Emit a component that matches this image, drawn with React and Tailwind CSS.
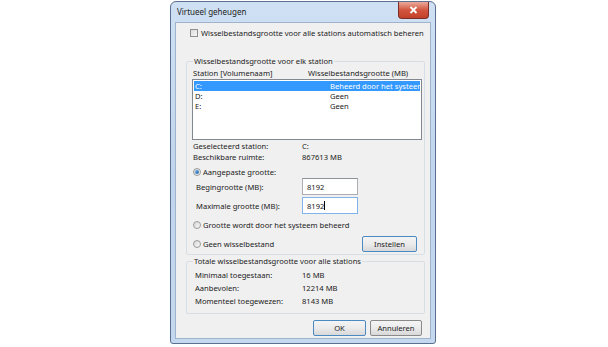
import { useState } from 'react'

const font = { fontFamily: '"Noto Sans", "Liberation Sans", sans-serif' }

function Radio({ checked, label }) {
  return (
    <div className="flex items-center h-[10px]">
      <span className="w-[8px] h-[8px] rounded-full border border-[#9a9a9a] bg-gradient-to-br from-[#d8d8d8] to-[#f8f8f8] flex items-center justify-center">
        {checked && <span className="w-[4px] h-[4px] rounded-full bg-gradient-to-br from-[#6fb3ea] to-[#1c5fa8]" />}
      </span>
      <span className="ml-[2px]">{label}</span>
    </div>
  )
}

function Button({ children, w, focus }) {
  return (
    <div className={`h-[16px] ${w} rounded-[2px] border ${focus ? 'border-[#4a8ac3]' : 'border-[#8a8a8a]'} bg-gradient-to-b from-[#f4f4f4] via-[#ebebeb] to-[#d8d8d8] flex items-center justify-center`}>
      {children}
    </div>
  )
}

function Row({ label, value, indent }) {
  return (
    <div className="flex h-[10px] items-center">
      <span className={`w-[109px] ${indent ? 'pl-[2px]' : ''}`}>{label}</span>
      <span>{value}</span>
    </div>
  )
}

export default function App() {
  const [rows] = useState([
    { id: 'C:', size: 'Beheerd door het systeem', sel: true },
    { id: 'D:', size: 'Geen' },
    { id: 'E:', size: 'Geen' },
  ])

  return (
    <div className="w-[608px] h-[347px] bg-white overflow-hidden text-[7.6px] leading-[10px] text-[#222]" style={font}>
      <div className="ml-[170px] mt-[1px] w-[266px] h-[343px] rounded-t-[6px] rounded-b-[3px] border border-[#5b7090] bg-gradient-to-b from-[#cfe0f3] via-[#c0d6ee] to-[#c4d8ef] flex flex-col px-[4px] pb-[4px]">
        {/* title bar */}
        <div className="h-[20px] flex items-start justify-between">
          <span className="mt-[5px] ml-[2px] text-[8px]">Virtueel geheugen</span>
          <div className="w-[31px] h-[17px] rounded-b-[4px] border border-t-0 border-[#7a2e25] bg-gradient-to-b from-[#e9a99b] via-[#d2553f] to-[#c3402a] flex items-center justify-center mr-[2px]">
            <svg width="9" height="8" viewBox="0 0 9 8">
              <path d="M1.5 1 L7.5 7 M7.5 1 L1.5 7" stroke="#ffffff" strokeWidth="1.8" />
            </svg>
          </div>
        </div>

        {/* client area */}
        <div className="flex-1 bg-[#f0f0f0] border border-[#9fb3cc] flex flex-col">
          <div className="mt-[5px] ml-[14px] flex items-center h-[10px]">
            <span className="w-[8px] h-[8px] border border-[#8f8f8f] bg-gradient-to-br from-[#dcdcdc] to-[#f6f6f6]" />
            <span className="ml-[3px]">Wisselbestandsgrootte voor alle stations automatisch beheren</span>
          </div>

          <fieldset className="mt-[18px] ml-[10px] w-[239px] min-w-0 border border-[#d5dfe5] rounded-[2px] pb-[2px]">
            <legend className="ml-[6px] px-[1px] h-[10px]">Wisselbestandsgrootte voor elk station</legend>
            <div className="pl-[6px] pr-[2px] flex flex-col">
              <div className="mt-[2px] flex h-[10px] items-center">
                <span className="w-[115px]">Station [Volumenaam]</span>
                <span>Wisselbestandsgrootte (MB)</span>
              </div>
              <div className="mt-[1px] -ml-[1px] h-[61px] bg-white border border-[#828790] pt-[1px] px-[1px] overflow-hidden">
                {rows.map(r => (
                  <div key={r.id} className={`flex h-[10px] items-center whitespace-nowrap overflow-hidden ${r.sel ? 'bg-[#3399ff] text-white' : ''}`}>
                    <span className="w-[136px] shrink-0 pl-[1px]">{r.id}</span>
                    <span>{r.size}</span>
                  </div>
                ))}
              </div>
              <div className="mt-[1px]"><Row label="Geselecteerd station:" value="C:" /></div>
              <div className="mt-[1px]"><Row label="Beschikbare ruimte:" value="867613 MB" /></div>
              <div className="mt-[5px]"><Radio checked label="Aangepaste grootte:" /></div>
              <div className="mt-[1px] flex items-center h-[17px]">
                <span className="w-[109px] pl-[3px]">Begingrootte (MB):</span>
                <div className="w-[56px] h-[17px] bg-white border border-[#abadb3] border-t-[#8e9299] flex items-center pl-[4px]">8192</div>
              </div>
              <div className="mt-[2px] flex items-center h-[17px]">
                <span className="w-[109px] pl-[3px]">Maximale grootte (MB):</span>
                <div className="w-[56px] h-[17px] bg-white border border-[#7eb4ea] flex items-center pl-[4px]">
                  8192<span className="w-px h-[9px] bg-black" />
                </div>
              </div>
              <div className="mt-[6px]"><Radio label="Grootte wordt door het systeem beheerd" /></div>
              <div className="mt-[5px] flex items-center justify-between h-[17px] pr-[5px]">
                <Radio label="Geen wisselbestand" />
                <Button w="w-[55px]" focus>Instellen</Button>
              </div>
            </div>
          </fieldset>

          <fieldset className="mt-[1px] ml-[10px] w-[239px] min-w-0 border border-[#d5dfe5] rounded-[2px] pb-[7px]">
            <legend className="ml-[6px] px-[1px] h-[10px]">Totale wisselbestandsgrootte voor alle stations</legend>
            <div className="pl-[6px] flex flex-col">
              <div className="mt-[4px]"><Row indent label="Minimaal toegestaan:" value="16 MB" /></div>
              <div className="mt-[3px]"><Row indent label="Aanbevolen:" value="12214 MB" /></div>
              <div className="mt-[3px]"><Row indent label="Momenteel toegewezen:" value="8143 MB" /></div>
            </div>
          </fieldset>

          <div className="mt-[6px] flex justify-end gap-[4px] pr-[8px]">
            <Button w="w-[53px]" focus>OK</Button>
            <Button w="w-[52px]">Annuleren</Button>
          </div>
        </div>
      </div>
    </div>
  )
}
